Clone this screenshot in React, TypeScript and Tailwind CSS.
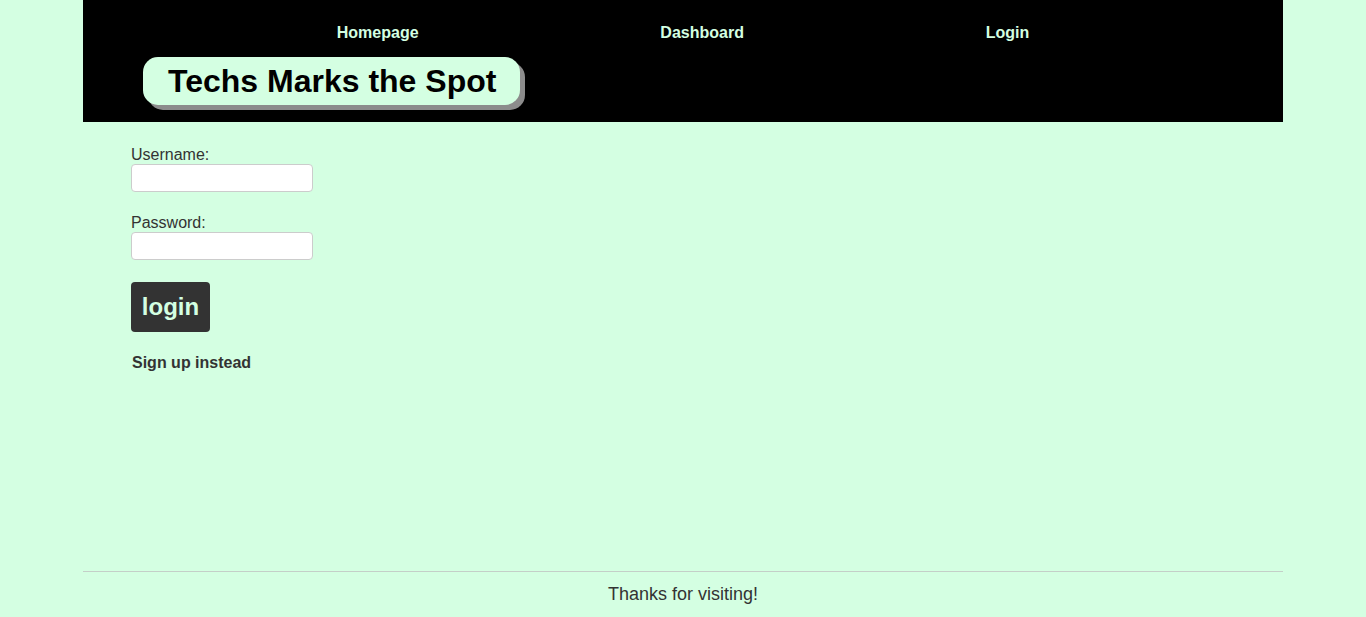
import React from "react";

const NAV = ["Homepage", "Dashboard", "Login"];

export default function App() {
  return (
    <div
      className="min-h-screen bg-[#d4ffe2] flex flex-col text-[#333]"
      style={{ fontFamily: '"Liberation Sans", Arial, sans-serif' }}
    >
      <div className="max-w-[1200px] w-full mx-auto flex flex-col flex-1">
        {/* Header */}
        <header className="bg-black h-[122px] flex flex-col">
          <nav className="flex justify-evenly px-3 pt-[24px]">
            {NAV.map((item) => (
              <a
                key={item}
                href="#"
                className="text-[16px] leading-[18px] font-bold text-[#d4ffe2]"
              >
                {item}
              </a>
            ))}
          </nav>
          <div className="mt-[15px] ml-[60px]">
            <h1 className="inline-block bg-[#d4ffe2] text-black text-[32px] leading-[38px] font-bold pl-[25px] pr-[24px] py-[5px] rounded-[15px] shadow-[5px_5px_0_#8c8c8c]">
              Techs Marks the Spot
            </h1>
          </div>
        </header>

        {/* Login form */}
        <main className="flex-1 pl-[48px] pt-[24px]">
          <form className="flex flex-col items-start">
            <label className="text-[16px] leading-[18px]">Username:</label>
            <input
              type="text"
              className="w-[182px] h-[28px] bg-white border border-[#ccc] rounded-[4px]"
            />
            <label className="mt-[22px] text-[16px] leading-[18px]">Password:</label>
            <input
              type="password"
              className="w-[182px] h-[28px] bg-white border border-[#ccc] rounded-[4px]"
            />
            <button
              type="button"
              className="mt-[22px] w-[79px] h-[50px] bg-[#333] text-[#d4ffe2] text-[24px] font-bold rounded-[4px]"
            >
              login
            </button>
            <a href="#" className="mt-[22px] ml-px text-[16px] leading-[18px] font-bold text-[#333]">
              Sign up instead
            </a>
          </form>
        </main>

        {/* Footer */}
        <footer className="border-t border-[#c4cfc8] h-[46px] flex items-center justify-center">
          <p className="text-[18px] text-[#333]">Thanks for visiting!</p>
        </footer>
      </div>
    </div>
  );
}
